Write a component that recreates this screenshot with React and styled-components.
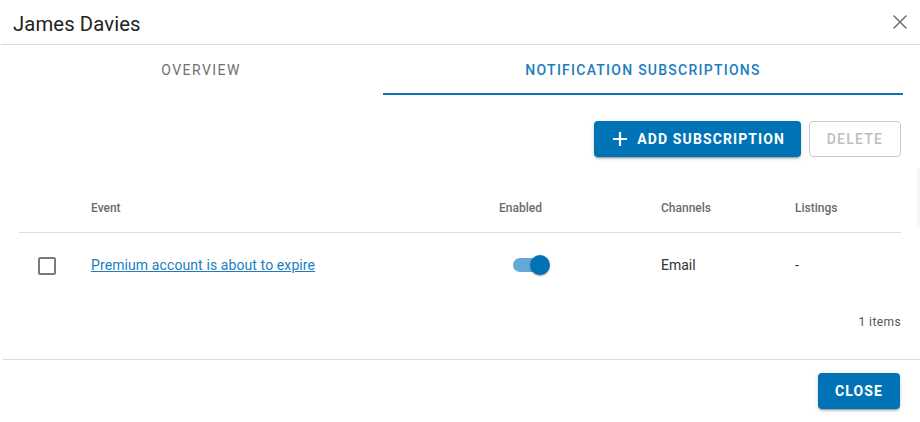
import React, { useState } from "react"
import styled, { createGlobalStyle } from "styled-components"

const GlobalStyle = createGlobalStyle`
  * { box-sizing: border-box; }
  body {
    margin: 0;
    background: #ffffff;
    font-family: Roboto, "Liberation Sans", Arial, sans-serif;
  }
`

const colunas = "72px 408px 162px 134px 1fr"

export default function App() {
    const [ativo, setAtivo] = useState(true)
    const [marcado, setMarcado] = useState(false)

    return (
        <>
            <GlobalStyle />
            <Dialog>
                <Header>
                    <Title>James Davies</Title>
                    <CloseIcon aria-label="close">
                        <svg width="14" height="14" viewBox="0 0 14 14">
                            <path d="M1 1 L13 13 M13 1 L1 13" stroke="#6f6f6f" strokeWidth="1.5" strokeLinecap="round" />
                        </svg>
                    </CloseIcon>
                </Header>

                <Content>
                    <Tabs>
                        <Tab>Overview</Tab>
                        <Tab active>Notification Subscriptions</Tab>
                    </Tabs>

                    <Toolbar>
                        <PrimaryButton>
                            <svg width="16" height="16" viewBox="0 0 16 16">
                                <path d="M8 1 V15 M1 8 H15" stroke="#fff" strokeWidth="2.2" />
                            </svg>
                            Add Subscription
                        </PrimaryButton>
                        <OutlineButton disabled>Delete</OutlineButton>
                    </Toolbar>

                    <Table>
                        <HeadRow>
                            <HeadCell />
                            <HeadCell>Event</HeadCell>
                            <HeadCell>Enabled</HeadCell>
                            <HeadCell>Channels</HeadCell>
                            <HeadCell>Listings</HeadCell>
                        </HeadRow>
                        <Row>
                            <Cell>
                                <Checkbox checked={marcado} onClick={() => setMarcado(!marcado)} />
                            </Cell>
                            <Cell>
                                <EventLink href="#">Premium account is about to expire</EventLink>
                            </Cell>
                            <Cell>
                                <Switch on={ativo} onClick={() => setAtivo(!ativo)}>
                                    <Track on={ativo} />
                                    <Thumb on={ativo} />
                                </Switch>
                            </Cell>
                            <Cell>Email</Cell>
                            <Cell>-</Cell>
                        </Row>
                    </Table>

                    <Count>1 items</Count>
                </Content>

                <Footer>
                    <PrimaryButton small>Close</PrimaryButton>
                </Footer>
                <EdgeShadow />
            </Dialog>
        </>
    )
}

const Dialog = styled.div`
width: 920px;
height: 422px;
position: relative;
display: flex;
flex-direction: column;
background: #ffffff;
overflow: hidden;
`

const Header = styled.div`
height: 45px;
margin-left: 1px;
padding: 0 12px 0 12px;
display: flex;
align-items: center;
justify-content: space-between;
border-bottom: 1px solid #dcdcdc;
`

const Title = styled.h2`
margin: 0;
margin-top: 4px;
font-size: 20.3px;
font-weight: 400;
color: #222222;
letter-spacing: 0.1px;
`

const CloseIcon = styled.div`
width: 14px;
height: 14px;
margin-right: 1px;
display: flex;
cursor: pointer;
`

const Content = styled.div`
padding: 0 17px 0 19px;
display: flex;
flex-direction: column;
`

const Tabs = styled.div`
display: flex;
height: 50px;
`

const Tab = styled.div`
flex: 1 1 auto;
display: flex;
align-items: center;
justify-content: center;
padding-top: 2px;
font-size: 14px;
font-weight: ${(p) => (p.active ? 500 : 400)};
letter-spacing: ${(p) => (p.active ? "1.25px" : "1.45px")};
text-transform: uppercase;
color: ${(p) => (p.active ? "#1c7dbd" : "#707070")};
border-bottom: 2px solid ${(p) => (p.active ? "#0a74b6" : "transparent")};
cursor: pointer;
`

const Toolbar = styled.div`
display: flex;
justify-content: flex-end;
gap: 8px;
padding-top: 26px;
padding-right: 2px;
`

const PrimaryButton = styled.button`
height: 36px;
padding: 0 ${(p) => (p.small ? "17px" : "16px")} 0 ${(p) => (p.small ? "17px" : "18px")};
display: flex;
align-items: center;
gap: 9px;
border: none;
border-radius: 4px;
background: #0073b7;
color: #ffffff;
font-family: Roboto, "Liberation Sans", Arial, sans-serif;
font-size: 14px;
font-weight: 700;
letter-spacing: 1.1px;
text-transform: uppercase;
box-shadow: 0 3px 1px -2px rgba(0,0,0,0.2), 0 2px 2px 0 rgba(0,0,0,0.14), 0 1px 5px 0 rgba(0,0,0,0.12);
cursor: pointer;
`

const OutlineButton = styled.button`
height: 36px;
width: 92px;
border: 1px solid #c9c9c9;
border-radius: 4px;
background: #ffffff;
color: #bdbdbd;
font-family: Roboto, "Liberation Sans", Arial, sans-serif;
font-size: 14px;
font-weight: 500;
letter-spacing: 1.25px;
text-transform: uppercase;
`

const Table = styled.div`
margin-top: 19px;
margin-right: 2px;
display: flex;
flex-direction: column;
`

const HeadRow = styled.div`
display: grid;
grid-template-columns: ${colunas};
height: 57px;
border-bottom: 1px solid #e0e0e0;
`

const HeadCell = styled.div`
display: flex;
align-items: center;
padding-top: 8px;
font-size: 12px;
font-weight: 500;
color: #6b6b6b;
`

const Row = styled.div`
display: grid;
grid-template-columns: ${colunas};
height: 64px;
`

const Cell = styled.div`
display: flex;
align-items: center;
font-size: 14px;
color: #333333;
&:first-child { padding-left: 19px; padding-top: 2px; }
`

const Checkbox = styled.div`
width: 18px;
height: 18px;
border: 2px solid #7a7a7a;
border-radius: 2px;
background: ${(p) => (p.checked ? "#0073b7" : "transparent")};
cursor: pointer;
`

const EventLink = styled.a`
color: #1a7ec0;
text-decoration: underline;
font-size: 14px;
letter-spacing: 0.1px;
`

const Switch = styled.div`
position: relative;
width: 38px;
height: 20px;
margin-left: 13px;
cursor: pointer;
`

const Track = styled.div`
position: absolute;
left: 1px;
top: 3px;
width: 34px;
height: 14px;
border-radius: 7px;
background: ${(p) => (p.on ? "#62a9d8" : "#bdbdbd")};
`

const Thumb = styled.div`
position: absolute;
top: 0;
left: ${(p) => (p.on ? "18px" : "0")};
width: 20px;
height: 20px;
border-radius: 50%;
background: ${(p) => (p.on ? "#0073b7" : "#fafafa")};
box-shadow: 0 2px 1px -1px rgba(0,0,0,0.2), 0 1px 1px 0 rgba(0,0,0,0.14), 0 1px 3px 0 rgba(0,0,0,0.12);
`

const Count = styled.div`
margin-top: 18px;
margin-right: 2px;
text-align: right;
font-size: 12px;
letter-spacing: 0.4px;
color: #555555;
`

const Footer = styled.div`
margin-top: 30px;
margin-left: 3px;
padding: 13px 20px 13px 0;
display: flex;
justify-content: flex-end;
border-top: 1px solid #dcdcdc;
`

const EdgeShadow = styled.div`
position: absolute;
right: 0;
top: 168px;
width: 5px;
height: 60px;
background: linear-gradient(to right, rgba(0,0,0,0), rgba(0,0,0,0.05));
`
